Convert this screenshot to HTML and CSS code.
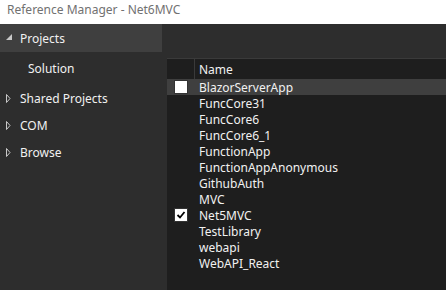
FILE: index.html
```html
<!DOCTYPE html>
<html lang="en">
<head>
  <meta charset="UTF-8" />
  <title>Reference Manager - Net6MVC</title>
  <link rel="stylesheet" href="styles.css">
</head>
<body>
  <div class="titlebar">Reference Manager - Net6MVC</div>

  <div class="main">
    <div class="sidebar">
      <div class="nav-item selected">
        <svg class="arrow" width="8" height="8" viewBox="0 0 8 8"><polygon points="7,0 7,6 1,6" fill="#c8c8c8"/></svg>
        <span>Projects</span>
      </div>
      <div class="nav-item sub">Solution</div>
      <div class="nav-item gap">
        <svg class="arrow" width="8" height="9" viewBox="0 0 8 9"><polygon points="1.5,0.5 5,4.5 1.5,8.5" fill="none" stroke="#c8c8c8"/></svg>
        <span>Shared Projects</span>
      </div>
      <div class="nav-item">
        <svg class="arrow" width="8" height="9" viewBox="0 0 8 9"><polygon points="1.5,0.5 5,4.5 1.5,8.5" fill="none" stroke="#c8c8c8"/></svg>
        <span>COM</span>
      </div>
      <div class="nav-item">
        <svg class="arrow" width="8" height="9" viewBox="0 0 8 9"><polygon points="1.5,0.5 5,4.5 1.5,8.5" fill="none" stroke="#c8c8c8"/></svg>
        <span>Browse</span>
      </div>
    </div>

    <div class="content">
      <div class="list">
        <div class="list-header">
          <div class="col-check"></div>
          <div class="col-name">Name</div>
        </div>
        <div class="row hover"><div class="col-check"><span class="box"></span></div><div class="col-name">BlazorServerApp</div></div>
        <div class="row"><div class="col-check"></div><div class="col-name">FuncCore31</div></div>
        <div class="row"><div class="col-check"></div><div class="col-name">FuncCore6</div></div>
        <div class="row"><div class="col-check"></div><div class="col-name">FuncCore6_1</div></div>
        <div class="row"><div class="col-check"></div><div class="col-name">FunctionApp</div></div>
        <div class="row"><div class="col-check"></div><div class="col-name">FunctionAppAnonymous</div></div>
        <div class="row"><div class="col-check"></div><div class="col-name">GithubAuth</div></div>
        <div class="row"><div class="col-check"></div><div class="col-name">MVC</div></div>
        <div class="row">
          <div class="col-check">
            <span class="box checked">
              <svg width="12" height="12" viewBox="0 0 12 12"><polyline points="2.5,6 5,8.5 9.5,3" fill="none" stroke="#000" stroke-width="1.8"/></svg>
            </span>
          </div>
          <div class="col-name">Net5MVC</div>
        </div>
        <div class="row"><div class="col-check"></div><div class="col-name">TestLibrary</div></div>
        <div class="row"><div class="col-check"></div><div class="col-name">webapi</div></div>
        <div class="row"><div class="col-check"></div><div class="col-name">WebAPI_React</div></div>
      </div>
    </div>
  </div>
</body>
</html>
```

FILE: styles.css
```css
body {
  margin: 0;
  width: 446px;
  height: 290px;
  overflow: hidden;
  background: #2d2d2d;
  font-family: "Noto Sans", "Open Sans", sans-serif;
  font-size: 12px;
  color: #f1f1f1;
}

/* Window title */
.titlebar {
  height: 24px;
  line-height: 20px;
  padding-left: 7px;
  background: #ffffff;
  color: #717171;
}

.main {
  display: flex;
  height: 266px;
}

/* Left navigation */
.sidebar {
  width: 162px;
  flex: none;
}

.nav-item {
  display: flex;
  align-items: center;
  height: 27px;
  padding-left: 5px;
}

.nav-item .arrow {
  width: 8px;
  margin-right: 7px;
  flex: none;
}

.nav-item.selected {
  height: 28px;
  background: #3f3f3f;
}

.nav-item.sub {
  height: 28px;
  margin-top: 2px;
  padding-left: 28px;
}

.nav-item.gap {
  margin-top: 3px;
}

/* Project list */
.content {
  flex: 1;
  padding: 34px 0 0 5px;
}

.list {
  height: 100%;
  background: #1e1e1e;
}

.list-header {
  display: flex;
  height: 20px;
  border-top: 1px solid #3a3a3a;
}

.list-header .col-check {
  border-right: 1px solid #3a3a3a;
}

.list-header .col-name {
  width: 248px;
  border-right: 1px solid #3a3a3a;
}

.col-check {
  width: 28px;
  flex: none;
  display: flex;
  align-items: center;
  padding-left: 7px;
  box-sizing: border-box;
}

.col-name {
  display: flex;
  align-items: center;
  padding-left: 4px;
  white-space: nowrap;
}

.row {
  display: flex;
  height: 16px;
}

.row.hover {
  background: #3f3f3f;
}

.box {
  width: 14px;
  height: 14px;
  box-sizing: border-box;
  border: 1px solid #333333;
  background: #ffffff;
  display: flex;
  align-items: center;
  justify-content: center;
}
```
